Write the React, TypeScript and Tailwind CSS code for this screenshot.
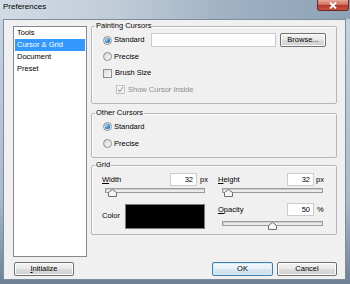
import type { ReactNode } from 'react';

// Win7-style push button
function Button({ children, primary = false, className = '' }: { children: ReactNode; primary?: boolean; className?: string }) {
  const skin = primary
    ? 'border-[#3c7fb1] bg-[linear-gradient(#f2f8fc,#e9f2f8_45%,#d8e8f2_50%,#c9dfec)] shadow-[inset_0_0_0_1px_#d6eefc]'
    : 'border-[#707070] bg-[linear-gradient(#f2f2f2,#ebebeb_45%,#dddddd_50%,#cfcfcf)] shadow-[inset_0_0_0_1px_#fcfcfc]';
  return (
    <button className={`flex h-[14px] items-center justify-center rounded-[2px] border leading-none text-black ${skin} ${className}`}>
      {children}
    </button>
  );
}

function Radio({ checked = false, label }: { checked?: boolean; label: string }) {
  return (
    <div className="flex items-center gap-[2px]">
      <span className="flex h-[9px] w-[9px] items-center justify-center rounded-full border border-[#8e8f8f] bg-[linear-gradient(135deg,#d4d4d4,#fafafa)]">
        {checked && <span className="h-[5px] w-[5px] rounded-full bg-[radial-gradient(circle_at_35%_35%,#9fdcff,#1f74c2_60%,#0b4f8f)]" />}
      </span>
      <span>{label}</span>
    </div>
  );
}

function Checkbox({ checked = false, disabled = false, label }: { checked?: boolean; disabled?: boolean; label: string }) {
  return (
    <div className={`flex items-center gap-[3px] ${disabled ? 'text-[#8d8d8d]' : ''}`}>
      <span
        className={`flex h-[9px] w-[9px] items-center justify-center border ${
          disabled ? 'border-[#c2c2c2] bg-[#f4f4f4]' : 'border-[#8e8f8f] bg-[linear-gradient(135deg,#dcdcdc,#fafafa)]'
        }`}
      >
        {checked && (
          <svg width="7" height="7" viewBox="0 0 7 7">
            <path d="M1 3.5 L2.8 5.5 L6 1" fill="none" stroke={disabled ? '#a6a6a6' : '#333'} strokeWidth="1.2" />
          </svg>
        )}
      </span>
      <span>{label}</span>
    </div>
  );
}

function TextBox({ value = '', className = '' }: { value?: string; className?: string }) {
  return (
    <div className={`flex items-center justify-end border border-[#c9cdd2] bg-white pr-[3px] ${className}`}>
      {value}
    </div>
  );
}

// slider track with the up-pointing thumb laid over it
function Slider({ thumb, className = '' }: { thumb: string; className?: string }) {
  return (
    <div className={`relative h-[9px] ${className}`}>
      <div className="h-[5px] border border-[#9a9a9a] bg-[#e9ebec] shadow-[inset_1px_1px_0_#cfcfcf]" />
      <svg className={`absolute top-[1px] ${thumb}`} width="9" height="8" viewBox="0 0 9 8">
        <path d="M4.5 0.5 L8.5 3.5 L8.5 7.5 L0.5 7.5 L0.5 3.5 Z" fill="#f6f6f6" stroke="#6f6f6f" />
      </svg>
    </div>
  );
}

function Group({ title, className = '', children }: { title: string; className?: string; children: ReactNode }) {
  return (
    <fieldset className={`min-w-0 rounded-[2px] border border-[#b5b5b5] px-[3px] shadow-[inset_1px_1px_0_#ffffff] ${className}`}>
      <legend className="px-[1px] leading-[10px]">{title}</legend>
      <div className="pl-[8px]">{children}</div>
    </fieldset>
  );
}

export default function App() {
  const pages = ['Tools', 'Cursor & Grid', 'Document', 'Preset'];

  return (
    <div className="flex h-[284px] w-[350px] flex-col overflow-hidden bg-[linear-gradient(#c9d5e1,#a9bacb_70%,#6d8197)] font-['Liberation_Sans',Arial,sans-serif] text-[7.5px] text-black">
      {/* Title bar */}
      <div className="flex h-[19px] items-start justify-between bg-[linear-gradient(90deg,#d2dbe4,#bfcbd7_35%,#9fb1c3_65%,#8ea2b6)]">
        <span className="pl-[3px] pt-[2px] text-[8px] leading-[10px]">Preferences</span>
        <button className="mr-[1px] flex h-[11px] w-[32px] items-center justify-center rounded-b-[3px] border border-t-0 border-[#6e2a22] bg-[linear-gradient(#e9a99b,#d0705f_45%,#b7392b_55%,#c4523f)]">
          <svg width="8" height="7" viewBox="0 0 8 7">
            <path d="M1 0.5 L7 6.5 M7 0.5 L1 6.5" stroke="#ffffff" strokeWidth="1.8" />
          </svg>
        </button>
      </div>

      {/* Client area */}
      <div className="mb-[4px] ml-[3px] mr-[4px] flex flex-1 flex-col border border-[#7d8d9e] bg-[#f0f0f0] pb-[3px] pl-[9px] pr-[8px] pt-[1px]">
        <div className="flex flex-1 gap-[4px]">
          {/* Page list */}
          <div className="mt-[5px] w-[74px] border border-[#828790] bg-white px-[1px]">
            {pages.map((p) => (
              <div
                key={p}
                className={`flex h-[12px] items-center pl-[2px] ${p === 'Cursor & Grid' ? 'bg-[#3399ff] text-white' : ''}`}
              >
                {p}
              </div>
            ))}
          </div>

          {/* Settings */}
          <div className="flex w-[246px] flex-col">
            <Group title="Painting Cursors" className="pb-[5px]">
              <div className="pt-[1px]">
                <div className="flex h-[16px] items-center gap-[4px]">
                  <div className="w-[44px]">
                    <Radio checked label="Standard" />
                  </div>
                  <TextBox className="h-[14px] w-[125px]" />
                  <Button className="w-[46px]">Browse...</Button>
                </div>
                <div className="flex h-[17px] items-center">
                  <Radio label="Precise" />
                </div>
                <div className="flex h-[16px] items-center">
                  <Checkbox label="Brush Size" />
                </div>
                <div className="flex h-[17px] items-center pl-[13px]">
                  <Checkbox checked disabled label="Show Cursor Inside" />
                </div>
              </div>
            </Group>

            <Group title="Other Cursors" className="mt-[4px] pb-[5px]">
              <div className="flex h-[17px] items-center">
                <Radio checked label="Standard" />
              </div>
              <div className="flex h-[17px] items-center">
                <Radio label="Precise" />
              </div>
            </Group>

            <Group title="Grid" className="mt-[2px] pb-[4px]">
              <div className="-ml-[1px] grid grid-cols-[108px_107px] gap-x-[8px] pt-[3px]">
                <div>
                  <div className="flex h-[13px] items-center">
                    <span className="flex-1"><u>W</u>idth</span>
                    <TextBox value="32" className="h-[13px] w-[27px]" />
                    <span className="w-[13px] pl-[3px]">px</span>
                  </div>
                  <Slider thumb="left-[3px]" className="ml-[3px] mt-[2px] w-[100px]" />
                </div>
                <div>
                  <div className="flex h-[13px] items-center">
                    <span className="flex-1"><u>H</u>eight</span>
                    <TextBox value="32" className="h-[13px] w-[27px]" />
                    <span className="w-[11px] pl-[2px]">px</span>
                  </div>
                  <Slider thumb="left-[2px]" className="ml-[4px] mt-[2px] w-[101px]" />
                </div>

                <div className="mt-[5px] flex items-center">
                  <span className="w-[23px]">Color</span>
                  <div className="h-[25px] w-[80px] border border-[#7a7a7a] bg-black" />
                </div>
                <div className="mt-[5px]">
                  <div className="mt-[1px] flex h-[13px] items-center">
                    <span className="flex-1"><u>O</u>pacity</span>
                    <TextBox value="50" className="h-[13px] w-[27px]" />
                    <span className="w-[11px] pl-[3px]">%</span>
                  </div>
                  <Slider thumb="left-[46px]" className="ml-[4px] mt-[5px] h-[8px] w-[101px]" />
                </div>
              </div>
            </Group>
          </div>
        </div>

        {/* Bottom buttons */}
        <div className="mt-[5px] flex h-[14px] items-center justify-between">
          <Button className="ml-[1px] w-[60px]">
            <span><u>I</u>nitialize</span>
          </Button>
          <div className="flex gap-[4px]">
            <Button primary className="w-[61px]">OK</Button>
            <Button className="w-[60px]">Cancel</Button>
          </div>
        </div>
      </div>
    </div>
  );
}
